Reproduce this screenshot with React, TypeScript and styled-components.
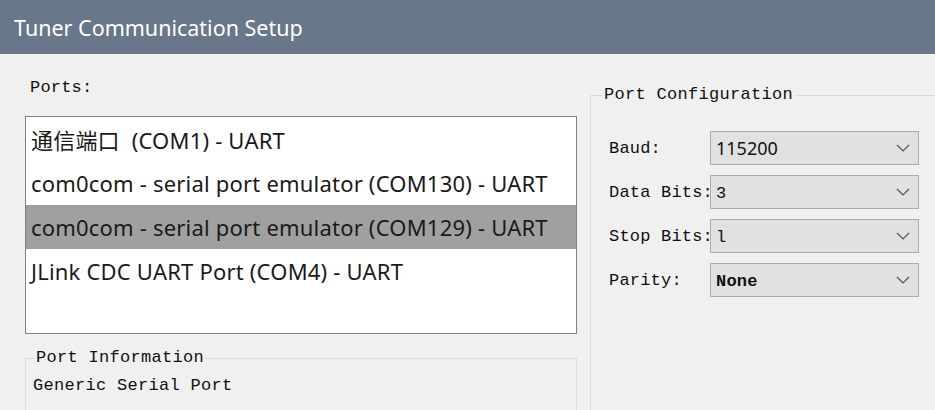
import React from "react";
import styled, { createGlobalStyle } from "styled-components";

const Global = createGlobalStyle`
  html, body { margin: 0; padding: 0; background: #f0f0f0; }
  body { overflow: hidden; }
`;

const SANS = `"Noto Sans", "Noto Sans CJK SC", sans-serif`;
const MONO = `"Liberation Mono", "Noto Sans CJK SC", monospace`;

const Window = styled.div`
  width: 935px;
  height: 410px;
  display: flex;
  flex-direction: column;
  background: #f0f0f0;
  overflow: hidden;
`;

const TitleBar = styled.div`
  height: 54px;
  flex: none;
  background: #687789;
  color: #ffffff;
  font-family: ${SANS};
  font-size: 21.5px;
  display: flex;
  align-items: center;
  padding-left: 14px;
  box-sizing: border-box;
`;

const Body = styled.div`
  height: 356px;
  flex: none;
  display: flex;
  gap: 13px;
  padding-left: 25px;
  overflow: hidden;
`;

const LeftCol = styled.div`
  width: 552px;
  flex: none;
  display: flex;
  flex-direction: column;
  padding-top: 24px;
`;

const MonoLabel = styled.div`
  font-family: ${MONO};
  font-size: 17px;
  letter-spacing: 0.2px;
  color: #111;
  line-height: 20px;
  padding-left: 5px;
`;

const ListBox = styled.div`
  margin-top: 18px;
  height: 218px;
  flex: none;
  box-sizing: border-box;
  border: 1px solid #828282;
  background: #ffffff;
  display: flex;
  flex-direction: column;
`;

const ListItem = styled.div<{ $selected?: boolean }>`
  height: 44px;
  flex: none;
  display: flex;
  align-items: center;
  padding-left: 5px;
  font-family: ${SANS};
  font-size: 22px;
  letter-spacing: 0.2px;
  color: #1a1a1a;
  white-space: pre;
  background: ${(p) => (p.$selected ? "#a0a0a0" : "transparent")};
`;

const Group = styled.fieldset<{ $top: number; $pad: number }>`
  margin: ${(p) => p.$top}px 0 -30px 0;
  padding: 0 0 0 ${(p) => p.$pad}px;
  border: 1px solid #dcdcdc;
  flex: 1;
  min-width: 0;
  display: flex;
  flex-direction: column;
`;

const Legend = styled.legend<{ $shift: number }>`
  font-family: ${MONO};
  font-size: 17px;
  letter-spacing: 0.3px;
  color: #111;
  line-height: 18px;
  padding: 0 1px;
  margin-left: ${(p) => p.$shift}px;
`;

const InfoText = styled.div`
  font-family: ${MONO};
  font-size: 17px;
  letter-spacing: 0.3px;
  color: #111;
  line-height: 20px;
  margin-top: 9px;
`;

const RightCol = styled.div`
  flex: 1;
  display: flex;
  flex-direction: column;
  padding-top: 32px;
  margin-right: -40px;
`;

const ConfigList = styled.div`
  display: flex;
  flex-direction: column;
  gap: 10px;
  margin-top: 27px;
`;

const Row = styled.div`
  display: flex;
  align-items: center;
  height: 34px;
`;

const RowLabel = styled.div`
  width: 101px;
  flex: none;
  font-family: ${MONO};
  font-size: 17px;
  letter-spacing: 0.2px;
  color: #111;
  white-space: nowrap;
  line-height: 20px;
  padding-top: 2px;
`;

const Combo = styled.div`
  width: 209px;
  height: 34px;
  box-sizing: border-box;
  border: 1px solid #adadad;
  background: #e1e1e1;
  display: flex;
  align-items: center;
  padding: 0 8px 0 5px;
`;

const ComboValue = styled.div<{ $mono?: boolean; $bold?: boolean }>`
  flex: 1;
  font-family: ${(p) => (p.$mono ? MONO : SANS)};
  font-size: ${(p) => (p.$mono ? "17px" : "18px")};
  font-weight: ${(p) => (p.$bold ? 700 : 400)};
  color: #111;
  letter-spacing: ${(p) => (p.$mono ? "0.2px" : "0")};
  padding-top: ${(p) => (p.$mono ? "3px" : "0")};
`;

const Chevron = () => (
  <svg width="14" height="8" viewBox="0 0 14 8" fill="none">
    <path d="M1 1 L7 7 L13 1" stroke="#555" strokeWidth="1.2" />
  </svg>
);

const ports = [
  "通信端口  (COM1) - UART",
  "com0com - serial port emulator (COM130) - UART",
  "com0com - serial port emulator (COM129) - UART",
  "JLink CDC UART Port (COM4) - UART",
];

const config: { label: string; value: string; mono?: boolean; bold?: boolean }[] = [
  { label: "Baud:", value: "115200" },
  { label: "Data Bits:", value: "3", mono: true },
  { label: "Stop Bits:", value: "l", mono: true },
  { label: "Parity:", value: "None", mono: true, bold: true },
];

export default function App() {
  return (
    <Window>
      <Global />
      <TitleBar>Tuner Communication Setup</TitleBar>
      <Body>
        <LeftCol>
          <MonoLabel>Ports:</MonoLabel>
          <ListBox>
            {ports.map((p, i) => (
              <ListItem key={p} $selected={i === 2}>
                {p}
              </ListItem>
            ))}
          </ListBox>
          <Group $top={15} $pad={7}>
            <Legend $shift={2}>Port Information</Legend>
            <InfoText>Generic Serial Port</InfoText>
          </Group>
        </LeftCol>
        <RightCol>
          <Group $top={0} $pad={18}>
            <Legend $shift={-6}>Port Configuration</Legend>
            <ConfigList>
              {config.map((c) => (
                <Row key={c.label}>
                  <RowLabel>{c.label}</RowLabel>
                  <Combo>
                    <ComboValue $mono={c.mono} $bold={c.bold}>
                      {c.value}
                    </ComboValue>
                    <Chevron />
                  </Combo>
                </Row>
              ))}
            </ConfigList>
          </Group>
        </RightCol>
      </Body>
    </Window>
  );
}
